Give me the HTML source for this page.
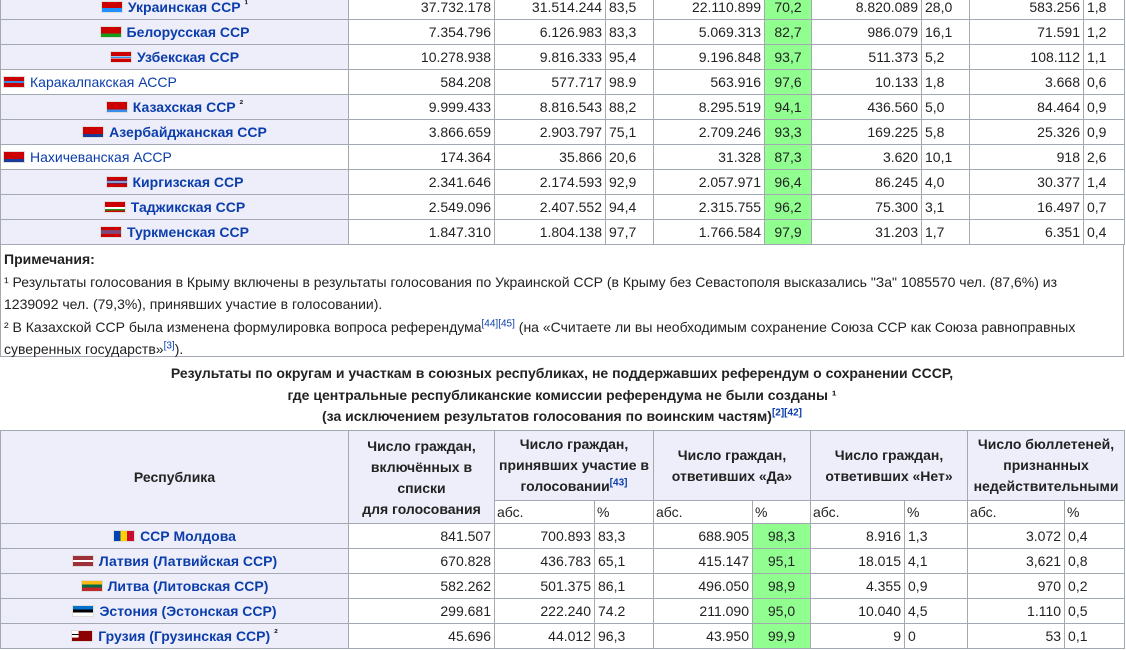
<!DOCTYPE html>
<html><head><meta charset="utf-8"><style>
*{margin:0;padding:0;box-sizing:border-box}
body{width:1126px;height:650px;overflow:hidden;background:#fff;font-family:"Liberation Sans",Arial,sans-serif;font-size:14px;color:#222;position:relative}
table{border-collapse:collapse;table-layout:fixed;position:absolute;left:0}
td,th{border:1px solid #a2a9b1;height:25px;padding:0 3px;white-space:nowrap;overflow:hidden}
td.n{text-align:right}
td.g{background:#90ff90;text-align:center}
td.r{background:#eeeefa;text-align:center;font-weight:bold}
td.r a,td.l a{color:#0b3dab;text-decoration:none}
td.l{text-align:left;padding-left:2px}
th{background:#eeeefa;font-weight:bold;line-height:21px;white-space:normal}
th.s{background:#fff;font-weight:normal;text-align:left;height:23px;padding:0 2px}
.f{display:inline-block;width:22px;height:12px;vertical-align:-1px;margin-right:5px;border:1px solid #ddd}
sup{font-size:10px;line-height:0}
sup a{color:#0b3dab}
.m{font-size:11px;vertical-align:4px;line-height:0}
.notes{position:absolute;left:0;top:244px;width:1124px;height:113px;border:1px solid #a2a9b1;border-top:none;padding:4px 28px 4px 3px;line-height:22.5px;font-size:14px}
.cap{position:absolute;left:0;width:1124px;top:363px;text-align:center;font-weight:bold;line-height:21.5px}
</style></head><body>
<table style="top:-6px;width:1124px">
<colgroup><col style="width:348px"><col style="width:146px"><col style="width:111px"><col style="width:48px"><col style="width:111px"><col style="width:47px"><col style="width:110px"><col style="width:48px"><col style="width:114px"><col style="width:41px"></colgroup>
<tr><td class="r"><span class="f" style="background:linear-gradient(#cc0000 62%,#1e90ff 62%)"></span><a>Украинская ССР</a> <span class="m">¹</span></td><td class="n">37.732.178</td><td class="n">31.514.244</td><td>83,5</td><td class="n">22.110.899</td><td class="g">70,2</td><td class="n">8.820.089</td><td>28,0</td><td class="n">583.256</td><td>1,8</td></tr>
<tr><td class="r"><span class="f" style="background:linear-gradient(#cc0000 66%,#1a9a1a 66%)"></span><a>Белорусская ССР</a></td><td class="n">7.354.796</td><td class="n">6.126.983</td><td>83,3</td><td class="n">5.069.313</td><td class="g">82,7</td><td class="n">986.079</td><td>16,1</td><td class="n">71.591</td><td>1,2</td></tr>
<tr><td class="r"><span class="f" style="background:linear-gradient(#cc0000 40%,#fff 40%,#fff 45%,#3a8eea 45%,#3a8eea 60%,#fff 60%,#fff 65%,#cc0000 65%)"></span><a>Узбекская ССР</a></td><td class="n">10.278.938</td><td class="n">9.816.333</td><td>95,4</td><td class="n">9.196.848</td><td class="g">93,7</td><td class="n">511.373</td><td>5,2</td><td class="n">108.112</td><td>1,1</td></tr>
<tr><td class="l"><span class="f" style="background:linear-gradient(#cc0000 40%,#3a8eea 40%,#3a8eea 60%,#cc0000 60%)"></span><a style="font-weight:normal">Каракалпакская АССР</a></td><td class="n">584.208</td><td class="n">577.717</td><td>98.9</td><td class="n">563.916</td><td class="g">97,6</td><td class="n">10.133</td><td>1,8</td><td class="n">3.668</td><td>0,6</td></tr>
<tr><td class="r"><span class="f" style="background:linear-gradient(#cc0000 75%,#3a8eea 75%)"></span><a>Казахская ССР</a> <span class="m">²</span></td><td class="n">9.999.433</td><td class="n">8.816.543</td><td>88,2</td><td class="n">8.295.519</td><td class="g">94,1</td><td class="n">436.560</td><td>5,0</td><td class="n">84.464</td><td>0,9</td></tr>
<tr><td class="r"><span class="f" style="background:linear-gradient(#cc0000 70%,#1a3a9a 70%)"></span><a>Азербайджанская ССР</a></td><td class="n">3.866.659</td><td class="n">2.903.797</td><td>75,1</td><td class="n">2.709.246</td><td class="g">93,3</td><td class="n">169.225</td><td>5,8</td><td class="n">25.326</td><td>0,9</td></tr>
<tr><td class="l"><span class="f" style="background:linear-gradient(#cc0000 70%,#1a3a9a 70%)"></span><a style="font-weight:normal">Нахичеванская АССР</a></td><td class="n">174.364</td><td class="n">35.866</td><td>20,6</td><td class="n">31.328</td><td class="g">87,3</td><td class="n">3.620</td><td>10,1</td><td class="n">918</td><td>2,6</td></tr>
<tr><td class="r"><span class="f" style="background:linear-gradient(#cc0000 35%,#1a3a9a 35%,#1a3a9a 45%,#fff 45%,#fff 55%,#1a3a9a 55%,#1a3a9a 65%,#cc0000 65%)"></span><a>Киргизская ССР</a></td><td class="n">2.341.646</td><td class="n">2.174.593</td><td>92,9</td><td class="n">2.057.971</td><td class="g">96,4</td><td class="n">86.245</td><td>4,0</td><td class="n">30.377</td><td>1,4</td></tr>
<tr><td class="r"><span class="f" style="background:linear-gradient(#cc0000 50%,#fff 50%,#fff 70%,#1a9a1a 70%,#1a9a1a 85%,#cc0000 85%)"></span><a>Таджикская ССР</a></td><td class="n">2.549.096</td><td class="n">2.407.552</td><td>94,4</td><td class="n">2.315.755</td><td class="g">96,2</td><td class="n">75.300</td><td>3,1</td><td class="n">16.497</td><td>0,7</td></tr>
<tr><td class="r"><span class="f" style="background:linear-gradient(#cc0000 35%,#3a8eea 35%,#3a8eea 45%,#cc0000 45%,#cc0000 55%,#3a8eea 55%,#3a8eea 65%,#cc0000 65%)"></span><a>Туркменская ССР</a></td><td class="n">1.847.310</td><td class="n">1.804.138</td><td>97,7</td><td class="n">1.766.584</td><td class="g">97,9</td><td class="n">31.203</td><td>1,7</td><td class="n">6.351</td><td>0,4</td></tr>
</table>
<div class="notes"><b>Примечания:</b><br>¹ Результаты голосования в Крыму включены в результаты голосования по Украинской ССР (в Крыму без Севастополя высказались "За" 1085570 чел. (87,6%) из 1239092 чел. (79,3%), принявших участие в голосовании).<br>² В Казахской ССР была изменена формулировка вопроса референдума<sup><a>[44]</a><a>[45]</a></sup> (на «Считаете ли вы необходимым сохранение Союза ССР как Союза равноправных суверенных государств»<sup><a>[3]</a></sup>).</div>
<div class="cap">Результаты по округам и участкам в союзных республиках, не поддержавших референдум о сохранении СССР,<br>где центральные республиканские комиссии референдума не были созданы ¹<br>(за исключением результатов голосования по воинским частям)<sup><a style="color:#0b3dab">[2]</a><a style="color:#0b3dab">[42]</a></sup></div>
<table style="top:430px;width:1124px">
<colgroup><col style="width:348px"><col style="width:146px"><col style="width:100px"><col style="width:59px"><col style="width:99px"><col style="width:58px"><col style="width:94px"><col style="width:63px"><col style="width:97px"><col style="width:60px"></colgroup>
<tr style="height:70px"><th rowspan="2">Республика</th><th rowspan="2" style="padding-top:2px">Число граждан, включённых в списки<br>для голосования</th><th colspan="2">Число граждан, принявших участие в голосовании<sup><a>[43]</a></sup></th><th colspan="2">Число граждан, ответивших «Да»</th><th colspan="2">Число граждан, ответивших «Нет»</th><th colspan="2">Число бюллетеней, признанных недействительными</th></tr>
<tr><th class="s">абс.</th><th class="s">%</th><th class="s">абс.</th><th class="s">%</th><th class="s">абс.</th><th class="s">%</th><th class="s">абс.</th><th class="s">%</th></tr>
<tr><td class="r"><span class="f" style="width:22px;background:linear-gradient(90deg,#0046ae 33%,#ffd200 33%,#ffd200 66%,#cc092f 66%)"></span><a>ССР Молдова</a></td><td class="n">841.507</td><td class="n">700.893</td><td>83,3</td><td class="n">688.905</td><td class="g">98,3</td><td class="n">8.916</td><td>1,3</td><td class="n">3.072</td><td>0,4</td></tr>
<tr><td class="r"><span class="f" style="background:linear-gradient(#9e3039 40%,#fff 40%,#fff 60%,#9e3039 60%)"></span><a>Латвия (Латвийская ССР)</a></td><td class="n">670.828</td><td class="n">436.783</td><td>65,1</td><td class="n">415.147</td><td class="g">95,1</td><td class="n">18.015</td><td>4,1</td><td class="n">3,621</td><td>0,8</td></tr>
<tr><td class="r"><span class="f" style="background:linear-gradient(#fdb913 33%,#006a44 33%,#006a44 66%,#c1272d 66%)"></span><a>Литва (Литовская ССР)</a></td><td class="n">582.262</td><td class="n">501.375</td><td>86,1</td><td class="n">496.050</td><td class="g">98,9</td><td class="n">4.355</td><td>0,9</td><td class="n">970</td><td>0,2</td></tr>
<tr><td class="r"><span class="f" style="background:linear-gradient(#0072ce 33%,#000 33%,#000 66%,#fff 66%)"></span><a>Эстония (Эстонская ССР)</a></td><td class="n">299.681</td><td class="n">222.240</td><td>74.2</td><td class="n">211.090</td><td class="g">95,0</td><td class="n">10.040</td><td>4,5</td><td class="n">1.110</td><td>0,5</td></tr>
<tr><td class="r"><span class="f" style="background:linear-gradient(#000 0 0) 0 33%/33% 12% no-repeat,linear-gradient(#fff 0 0) 0 0/33% 66% no-repeat,#8b0000"></span><a>Грузия (Грузинская ССР)</a> <span class="m">²</span></td><td class="n">45.696</td><td class="n">44.012</td><td>96,3</td><td class="n">43.950</td><td class="g">99,9</td><td class="n">9</td><td>0</td><td class="n">53</td><td>0,1</td></tr>
</table>
</body></html>
